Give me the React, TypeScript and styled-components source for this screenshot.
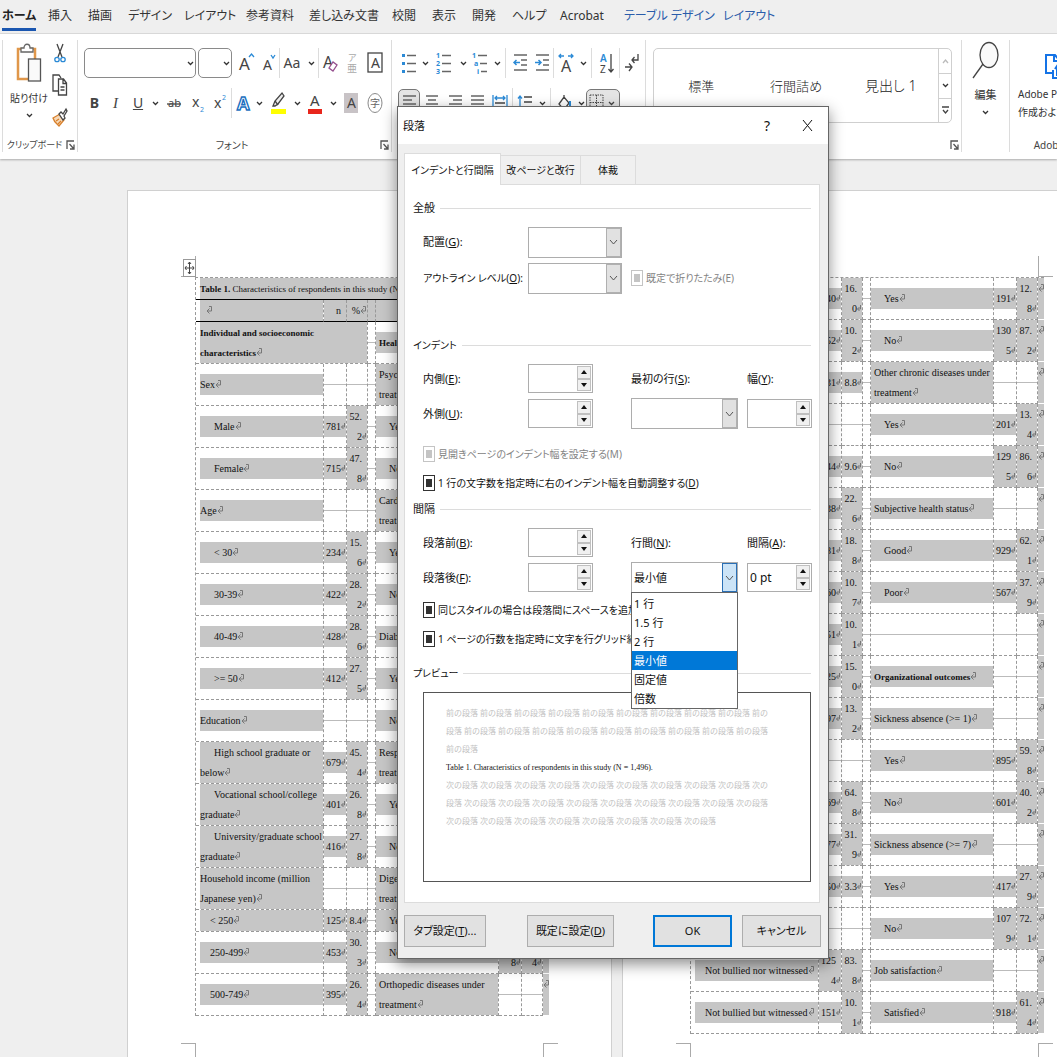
import React from 'react';
import styled, { createGlobalStyle, css } from 'styled-components';

const UI = '"Noto Sans", "Noto Sans CJK JP", sans-serif';
const SERIF = '"Liberation Serif", "Noto Sans CJK JP", serif';
const BLUE = '#2b8ad6';
const INK = '#444';

const Global = createGlobalStyle`
  *, *::before, *::after { box-sizing: border-box; }
  body { margin: 0; background: #efefef; font-family: ${UI}; font-feature-settings: "palt"; color: #222; }
  button, input, select { font: inherit; font-feature-settings: inherit; color: inherit; margin: 0; }
`;

/* ---------- window ---------- */

const Window = styled.div`
  position: relative;
  height: 100vh;
  display: flex;
  flex-direction: column;
  overflow: hidden;
`;

const Tabs = styled.nav`
  display: grid;
  grid-template-columns: 46px 40px 40px 56px 62px 63px 83px 40px 40px 40px 48px 64px 99px 60px;
  flex: none;
  height: 34px;
  padding: 4px 0 0 2px;
  border-bottom: 1px solid #dcdcdc;
`;

const TabLink = styled.a<{ $active?: boolean; $accent?: boolean }>`
  justify-self: start;
  font-size: 12px;
  line-height: 24px;
  height: 27px;
  white-space: nowrap;
  text-decoration: none;
  color: ${p => (p.$accent ? '#2a5caa' : '#333')};
  ${p => p.$active && css`font-weight: 700; color: #222; border-bottom: 3px solid #1a56b0;`}
`;

const Ribbon = styled.div`
  display: flex;
  flex: none;
  height: 125px;
  padding: 6px 0 7px 2px;
  overflow: hidden;
  background: #fff;
  box-shadow: 0 1px 2px #aaa;
  z-index: 1;
`;

const Group = styled.section<{ $w: number; $pad?: number }>`
  flex: 0 0 ${p => p.$w}px;
  min-width: 0;
  display: flex;
  flex-direction: column;
  justify-content: space-between;
  border-left: 1px solid #dcdcdc;
  padding-left: ${p => p.$pad ?? 0}px;
  white-space: nowrap;
`;

const GroupFoot = styled.div<{ $tight?: boolean }>`
  display: flex;
  align-items: center;
  height: 14px;
  font-size: ${p => (p.$tight ? 9 : 10)}px;
  line-height: 14px;
  color: #444;
  padding-right: 2px;
`;

const FootName = styled.span`
  flex: 1;
  text-align: center;
`;

const Plain = styled.button<{ $w?: number; $on?: boolean }>`
  display: flex;
  align-items: center;
  justify-content: center;
  flex: none;
  width: ${p => (p.$w ? `${p.$w}px` : 'auto')};
  height: 28px;
  padding: 0;
  border: 0;
  background: none;
  font-size: 14px;
  line-height: 20px;
  color: #444;
  ${p => p.$on && css`border: 1px solid #777; border-radius: 5px; background: #e4e4e4;`}
`;

const Tools = styled.div<{ $top?: number }>`
  display: flex;
  align-items: center;
  height: 30px;
  margin-top: ${p => p.$top ?? 0}px;
`;

const Rule = styled.span<{ $m?: number }>`
  flex: none;
  width: 1px;
  height: 30px;
  margin: 0 ${p => p.$m ?? 0}px;
  background: #dcdcdc;
`;

const Combo = styled.div<{ $w: number }>`
  display: grid;
  flex: none;
  width: ${p => p.$w}px;
  height: 30px;
  margin-right: 2px;
  align-items: center;
  select, svg { grid-area: 1 / 1; }
  svg { justify-self: end; margin-right: 2px; pointer-events: none; }
  select {
    width: 100%;
    height: 100%;
    appearance: none;
    border: 1px solid #8a8a8a;
    border-radius: 5px;
    background: #fff;
  }
`;

const ClipRow = styled.div`
  display: flex;
  justify-content: space-between;
  padding: 3px 9px 0 7px;
`;

const Stack = styled.div<{ $gap?: number }>`
  display: flex;
  flex-direction: column;
  align-items: center;
  gap: ${p => p.$gap ?? 0}px;
`;

const BigButton = styled.button<{ $small?: boolean }>`
  display: flex;
  flex-direction: column;
  align-items: center;
  gap: 6px;
  padding: 0;
  border: 0;
  background: none;
  font-size: ${p => (p.$small ? 10 : 11)}px;
  line-height: 18px;
  color: #333;
`;

const Gallery = styled.div`
  display: flex;
  height: 75px;
  margin: 8px 9px 0 7px;
  border: 1px solid #cfcfcf;
  border-radius: 5px;
`;

const StyleButton = styled.button<{ $size: number }>`
  flex: 1;
  padding: 0;
  border: 0;
  background: none;
  font-size: ${p => p.$size}px;
  font-weight: 300;
  line-height: 24px;
  color: #222;
`;

const Scrolls = styled.div`
  display: grid;
  grid-template-rows: repeat(3, 1fr);
  width: 13px;
  border-left: 1px solid #cfcfcf;
  button { display: grid; place-items: center; padding: 0; border: 0; background: none; }
  button + button { border-top: 1px solid #cfcfcf; }
`;

const AdobeButton = styled(BigButton)`
  width: 80px;
  padding-top: 6px;
  align-items: stretch;
  text-align: left;
  gap: 5px;
  svg { align-self: center; }
`;

/* ---------- icons ---------- */

type IcoProps = { w: number; h: number; box?: string; children: React.ReactNode };
const Ico = ({ w, h, box, children }: IcoProps) => (
  <svg width={w} height={h} viewBox={box ?? `0 0 ${w} ${h}`} fill="none" stroke={INK} strokeWidth="1.3" overflow="visible" aria-hidden="true">
    {children}
  </svg>
);

const Chev = ({ color = '#333' }: { color?: string }) => (
  <Ico w={7} h={5}><path d="M1 1l2.500 2.500L6 1" stroke={color} /></Ico>
);

const Drop = ({ w = 10 }: { w?: number }) => <Plain $w={w} aria-label="オプション"><Chev /></Plain>;

const Launcher = () => (
  <Ico w={9} h={10}><path d="M1 9V1h7M3.500 4l4 4.500M8 4.500V9H4" stroke="#555" /></Ico>
);

const Lines = ({ rows }: { rows: [number, number][] }) => (
  <Ico w={16} h={20}>
    {rows.map(([a, b], i) => <path key={i} d={`M${a} ${3 + i * 4}H${b}`} strokeWidth="1.5" stroke="#666" />)}
  </Ico>
);

const PasteIcon = () => (
  <Ico w={26} h={40}>
    <rect x="2" y="6" width="17" height="30" fill="#fff" stroke="#e0974a" strokeWidth="2.500" />
    <path d="M5 9V5h3c0-5 6-5 6 0h3v4z" fill="#fff" stroke="#666" />
    <rect x="12.500" y="16" width="12" height="22" fill="#fafafa" stroke="#555" />
  </Ico>
);

const ScissorsIcon = () => (
  <Ico w={14} h={20}>
    <path d="M4 1l5 13M10 1L5 14" />
    <circle cx="4" cy="16.500" r="2.200" stroke={BLUE} /><circle cx="10" cy="16.500" r="2.200" stroke={BLUE} />
  </Ico>
);

const CopyIcon = () => (
  <Ico w={16} h={22}>
    <path d="M6 17H1V1h6l2 3" />
    <path d="M6.500 5h5l3 4v12h-8zM11 5v4.500h3.500M8.500 13h4M8.500 16h4" fill="#fff" />
  </Ico>
);

const BrushIcon = () => (
  <Ico w={16} h={20}>
    <path d="M1 11l7-4 4 6-5 6c-2-2-5-4-6-8z" fill="#f7d9b8" stroke="#d8802c" />
    <path d="M4 14l3-2M6 17l3-3" stroke="#d8802c" />
    <path d="M7 7l2-2 2 2 3-5 1 2-3 5 1 2-2 2z" fill="#fff" />
  </Ico>
);

const TextGlyph = ({ children, size = 15, x = 1, y = 17 }: { children: string; size?: number; x?: number; y?: number }) => (
  <text x={x} y={y} fontSize={size} fontFamily="Noto Sans, Noto Sans CJK JP" fill="#444" stroke="none">{children}</text>
);

const ListIcon = ({ marks }: { marks: string[] }) => (
  <Ico w={16} h={22}>
    {marks.map((m, i) => (
      <React.Fragment key={i}>
        {m === '•'
          ? <rect x="1" y={2 + i * 8} width="3" height="3" fill={BLUE} stroke="none" />
          : <text x={m === 'a' ? 2 : m === 'i' ? 5 : 0} y={6 + i * 8} fontSize="7" fontWeight="700" fontFamily="Noto Sans" fill={BLUE} stroke="none">{m}</text>}
        <path d={`M${m === 'a' ? 8 : m === 'i' ? 9 : 6} ${3.5 + i * 8}H15`} stroke="#666" strokeWidth="1.500" />
      </React.Fragment>
    ))}
  </Ico>
);

const DentIcon = ({ out }: { out?: boolean }) => (
  <Ico w={15} h={20}>
    <path d="M1 2h13M8 7h6M8 12h6M1 17h13" stroke="#666" strokeWidth="1.500" />
    <path d={out ? 'M7 9.500H1M3.500 7L1 9.500l2.500 2.500' : 'M0 9.500h6M3.500 7L6 9.500 3.500 12'} stroke={BLUE} strokeWidth="1.500" />
  </Ico>
);

/* ---------- document ---------- */

const Canvas = styled.main`
  flex: 1;
  min-height: 0;
  display: flex;
  gap: 10px;
  padding: 31px 0 0 127px;
  overflow: hidden;
`;

const Sheet = styled.article`
  flex: 0 0 485px;
  display: flex;
  flex-direction: column;
  padding: 65px 0 0 67px;
  border: 1px solid #d0d0d0;
  border-bottom: 0;
  background: #fff;
`;

const Marks = styled.div<{ $foot?: boolean }>`
  position: relative;
  display: flex;
  flex: none;
  justify-content: space-between;
  width: 377px;
  margin-left: -14px;
  ${p => p.$foot && css`margin-top: auto;`}
`;

const Corner = styled.span<{ $side: 'left' | 'right'; $foot?: boolean }>`
  width: 15px;
  height: ${p => (p.$foot ? 14 : 21)}px;
  border: 0 solid #aaa;
  border-${p => (p.$side === 'left' ? 'right' : 'left')}-width: 1px;
  border-${p => (p.$foot ? 'top' : 'bottom')}-width: 1px;
`;

const MoveHandle = styled.span`
  position: absolute;
  left: 2px;
  top: 3px;
  width: 13px;
  height: 18px;
  display: grid;
  place-items: center;
  border: 1px solid #999;
  background: #fff;
`;

const Grid = styled.table`
  width: 354px;
  table-layout: fixed;
  border-collapse: separate;
  border-spacing: 0;
  border: 0 dashed #999;
  border-width: 1px 0 0 1px;
  font-family: ${SERIF};
  font-size: 10px;
  color: #111;
`;

const Cell = styled.td<{ $lead?: boolean; $fill?: boolean; $empty?: boolean; $rule?: boolean }>`
  padding: 0 0 0 ${p => (p.$lead ? 4 : 0)}px;
  border: 0 dashed #999;
  border-width: 0 1px 1px 0;
  overflow: hidden;
  ${p => p.$rule && css`border-bottom: 1px solid #000;`}
  ${p => p.$fill && css`background: #c6c6c6;`}
  ${p => p.$empty && css`background: linear-gradient(#bbb, #bbb) center / 100% 1px no-repeat;`}
`;

const Row = styled.tr<{ $short?: boolean }>`
  height: ${p => (p.$short ? 22 : 42)}px;
`;

const EndCell = styled.td`
  padding: 6px 0 0;
  vertical-align: top;
  border-bottom: 1px solid #fff;
  background: #c6c6c6;
  svg { display: block; }
`;

const Bar = styled.div<{ $indent?: number; $inset?: number; $bold?: boolean; $num?: boolean; $fine?: boolean }>`
  padding: 1px 0 0 ${p => p.$inset ?? 0}px;
  background: #c6c6c6;
  line-height: 20px;
  white-space: nowrap;
  text-indent: ${p => p.$indent ?? 0}px;
  font-weight: ${p => (p.$bold ? 700 : 400)};
  ${p => p.$fine && css`font-size: 9px;`}
  ${p => p.$num && css`text-align: right; padding-right: 1px;`}
`;

const Line = styled.div<{ $open?: boolean }>`
  padding-right: ${p => (p.$open ? 4 : 0)}px;
  & + & { text-indent: 0; }
`;

const Return = ({ small }: { small?: boolean }) => (
  <svg width={small ? 4 : 6} height="8" viewBox={small ? '0 0 4 8' : '0 0 6 8'} fill="none" stroke="#777" aria-hidden="true">
    {small ? <path d="M3.500 1v4H.500M2.500 3L.500 5l2 2" /> : <path d="M3 .500h2.500V5H1M3.500 2.500L1 5l2.500 2.500" />}
  </svg>
);

type Half = { t?: string[]; i?: number; b?: boolean; n?: string[]; p?: string[] };

const Num = ({ v }: { v?: string[] }) =>
  v ? (
    <Cell>
      <Bar $num>
        {v.map((s, k) => (
          <Line key={k} $open={k < v.length - 1}>{s}{k === v.length - 1 && <Return small />}</Line>
        ))}
      </Bar>
    </Cell>
  ) : <Cell $empty />;

const Label = ({ h, lead, span }: { h: Half; lead?: boolean; span?: number }) =>
  h.t ? (
    <Cell $lead={lead} colSpan={span}>
      <Bar $indent={h.i} $bold={h.b} $inset={lead ? 0 : 3} $fine={h.b}>
        {h.t.map((s, k) => (
          <Line key={k}>{s}{k === h.t!.length - 1 && <Return />}</Line>
        ))}
      </Bar>
    </Cell>
  ) : <Cell $empty colSpan={span} />;

const BodyRow = ({ l, r, short, span }: { l: Half; r: Half; short?: boolean; span?: boolean }) => (
  <Row $short={short}>
    <Label h={l} lead span={span ? 3 : undefined} />
    {!span && <><Num v={l.n} /><Num v={l.p} /></>}
    <Cell $empty />
    <Label h={r} />
    <Num v={r.n} />
    <Num v={r.p} />
    <EndCell><Return /></EndCell>
  </Row>
);

const Cols = () => (
  <colgroup>
    {[128, 23, 21, 8, 123, 23, 21, 6].map((w, k) => <col key={k} style={{ width: w }} />)}
  </colgroup>
);

const yes: Half = { t: ['Yes'], i: 10 };
const no: Half = { t: ['No'], i: 10 };
const under = (s: string): Half => ({ t: [`${s} diseases under`, 'treatment'] });

const pageOne: [Half, Half][] = [
  [{ t: ['Sex'] }, under('Psychiatric')],
  [{ t: ['Male'], i: 14, n: ['781'], p: ['52.', '2'] }, yes],
  [{ t: ['Female'], i: 14, n: ['715'], p: ['47.', '8'] }, no],
  [{ t: ['Age'] }, under('Cardiac')],
  [{ t: ['< 30'], i: 14, n: ['234'], p: ['15.', '6'] }, yes],
  [{ t: ['30-39'], i: 14, n: ['422'], p: ['28.', '2'] }, no],
  [{ t: ['40-49'], i: 14, n: ['428'], p: ['28.', '6'] }, { t: ['Diabetes'] }],
  [{ t: ['>= 50'], i: 14, n: ['412'], p: ['27.', '5'] }, yes],
  [{ t: ['Education'] }, no],
  [{ t: ['High school graduate or', 'below'], i: 14, n: ['679'], p: ['45.', '4'] }, under('Respiratory')],
  [{ t: ['Vocational school/college', 'graduate'], i: 14, n: ['401'], p: ['26.', '8'] }, yes],
  [{ t: ['University/graduate school', 'graduate'], i: 14, n: ['416'], p: ['27.', '8'] }, no],
  [{ t: ['Household income (million', 'Japanese yen)'] }, under('Digestive')],
  [{ t: ['< 250'], i: 10, n: ['125'], p: ['8.4'] }, yes],
  [{ t: ['250-499'], i: 10, n: ['453'], p: ['30.', '3'] }, { ...no, n: ['141', '8'], p: ['94.', '4'] }],
  [{ t: ['500-749'], i: 10, n: ['395'], p: ['26.', '4'] }, under('Orthopedic')],
];

const pageTwo: [Half, Half][] = [
  [{ t: ['Yes'], i: 10, n: ['240'], p: ['16.', '0'] }, { ...yes, n: ['191'], p: ['12.', '8'] }],
  [{ t: ['No'], i: 10, n: ['152'], p: ['10.', '2'] }, { ...no, n: ['130', '5'], p: ['87.', '2'] }],
  [{ t: ['Yes'], i: 10, n: ['131'], p: ['8.8'] }, { t: ['Other chronic diseases under', 'treatment'] }],
  [{}, { ...yes, n: ['201'], p: ['13.', '4'] }],
  [{ t: ['Yes'], i: 10, n: ['144'], p: ['9.6'] }, { ...no, n: ['129', '5'], p: ['86.', '6'] }],
  [{ t: ['Yes'], i: 10, n: ['338'], p: ['22.', '6'] }, { t: ['Subjective health status'] }],
  [{ t: ['Yes'], i: 10, n: ['281'], p: ['18.', '8'] }, { t: ['Good'], i: 10, n: ['929'], p: ['62.', '1'] }],
  [{ t: ['Yes'], i: 10, n: ['160'], p: ['10.', '7'] }, { t: ['Poor'], i: 10, n: ['567'], p: ['37.', '9'] }],
  [{ t: ['Yes'], i: 10, n: ['151'], p: ['10.', '1'] }, {}],
  [{ t: ['Yes'], i: 10, n: ['225'], p: ['15.', '0'] }, { t: ['Organizational outcomes'], b: true }],
  [{ t: ['Yes'], i: 10, n: ['197'], p: ['13.', '2'] }, { t: ['Sickness absence (>= 1)'] }],
  [{}, { ...yes, n: ['895'], p: ['59.', '8'] }],
  [{ t: ['No'], i: 10, n: ['969'], p: ['64.', '8'] }, { ...no, n: ['601'], p: ['40.', '2'] }],
  [{ t: ['Yes'], i: 10, n: ['477'], p: ['31.', '9'] }, { t: ['Sickness absence (>= 7)'] }],
  [{ t: ['Yes'], i: 10, n: ['50'], p: ['3.3'] }, { ...yes, n: ['417'], p: ['27.', '9'] }],
  [{}, { ...no, n: ['107', '9'], p: ['72.', '1'] }],
  [{ t: ['Not bullied nor witnessed'], i: 10, n: ['125', '4'], p: ['83.', '8'] }, { t: ['Job satisfaction'] }],
  [{ t: ['Not bullied but witnessed'], i: 10, n: ['151'], p: ['10.', '1'] }, { t: ['Satisfied'], i: 10, n: ['918'], p: ['61.', '4'] }],
];

/* ---------- dialog ---------- */

const Dialog = styled.div`
  position: absolute;
  z-index: 5;
  left: 397px;
  top: 106px;
  width: 432px;
  border: 1px solid #666;
  background: #efefef;
  box-shadow: 0 5px 14px rgba(0, 0, 0, 0.45);
  font-size: 11px;
  line-height: 18px;
  color: #111;
  white-space: nowrap;
`;

const TitleBar = styled.header`
  display: flex;
  align-items: center;
  height: 37px;
  padding: 0 13px 0 5px;
  background: #fff;
  span { flex: 1; }
  button { display: grid; place-items: center; width: 16px; height: 24px; margin-left: 24px; padding: 0; border: 0; background: none; font-size: 14px; }
`;

const PageTabs = styled.div`
  display: flex;
  align-items: flex-end;
  height: 40px;
  padding-left: 6px;
`;

const PageTab = styled.button<{ $w: number; $active?: boolean }>`
  width: ${p => p.$w}px;
  height: ${p => (p.$active ? 32 : 29)}px;
  padding: 0;
  border: 1px solid #dcdcdc;
  border-left-width: ${p => (p.$active ? 1 : 0)}px;
  border-bottom: 0;
  font-size: 10px;
  background: ${p => (p.$active ? '#fff' : '#f0f0f0')};
  ${p => p.$active && css`margin-bottom: -1px; z-index: 1;`}
`;

const Panel = styled.form`
  margin: 0 8px 0 6px;
  padding: 13px 8px 20px 8px;
  border: 1px solid #dcdcdc;
  background: #fff;
`;

const Section = styled.h3<{ $top?: number; $gap?: number; $small?: boolean }>`
  display: flex;
  align-items: center;
  gap: 5px;
  height: 20px;
  margin: ${p => p.$top ?? 0}px 0 ${p => p.$gap ?? 6}px;
  font-size: ${p => (p.$small ? 10 : 11)}px;
  font-weight: 400;
  &::after { content: ''; flex: 1; height: 1px; background: #dcdcdc; }
`;

const FormRow = styled.div<{ $h?: number; $small?: boolean }>`
  display: grid;
  grid-template-columns: 105px 103px 116px 65px;
  align-items: center;
  height: ${p => p.$h ?? 35}px;
  padding-left: 10px;
  ${p => p.$small && css`font-size: 10px;`}
`;

const Picker = styled.div<{ $w: number; $hot?: boolean }>`
  position: relative;
  display: grid;
  grid-template-columns: 1fr 15px;
  width: ${p => p.$w}px;
  height: 31px;
  border: 1px solid #adadad;
  background: #fff;
  select {
    grid-area: 1 / 1 / 2 / 3;
    width: 100%;
    padding: 0 2px;
    border: 0;
    background: none;
    appearance: none;
  }
`;

const PickerArrow = styled.span<{ $hot?: boolean }>`
  grid-area: 1 / 2;
  display: grid;
  place-items: center;
  pointer-events: none;
  border: 1px solid ${p => (p.$hot ? '#2a6fb5' : '#b0b0b0')};
  background: ${p => (p.$hot ? '#cce4f7' : '#e1e1e1')};
`;

const Options = styled.ul`
  position: absolute;
  z-index: 3;
  top: 29px;
  left: -1px;
  right: -1px;
  margin: 0;
  padding: 1px 0 0;
  list-style: none;
  border: 1px solid #666;
  background: #fff;
`;

const Option = styled.li<{ $on?: boolean }>`
  height: 19px;
  padding-left: 2px;
  line-height: 19px;
  ${p => p.$on && css`background: #0078d7; color: #fff;`}
`;

const SpinBox = styled.div`
  display: grid;
  grid-template: 1fr 1fr / 1fr 14px;
  width: 65px;
  height: 29px;
  padding: 1px;
  border: 1px solid #adadad;
  background: #fff;
  input { grid-row: 1 / 3; min-width: 0; padding: 0 1px; border: 0; background: none; font-size: 12px; outline: 0; }
  button { display: grid; place-items: center; padding: 0; border: 1px solid #c0c0c0; background: #f0f0f0; }
`;

const CheckRow = styled.label<{ $off?: boolean }>`
  display: flex;
  align-items: center;
  gap: 3px;
  height: 29px;
  font-size: 10px;
  color: ${p => (p.$off ? '#838383' : '#111')};
  input {
    flex: none;
    appearance: none;
    width: 12px;
    height: 16px;
    border: 1px solid ${p => (p.$off ? '#c4c4c4' : '#333')};
    background: linear-gradient(${p => (p.$off ? '#c4c4c4, #c4c4c4' : '#333, #333')}) center / 6px 8px no-repeat #fff;
  }
`;

const Checks = styled.div<{ $top?: number; $room?: number }>`
  padding: ${p => p.$top ?? 0}px ${p => p.$room ?? 0}px 0 10px;
`;

const Preview = styled.div`
  height: 190px;
  margin-left: 10px;
  padding: 12px 22px;
  border: 1px solid #555;
  font-family: ${SERIF};
  font-feature-settings: normal;
  font-size: 8px;
  line-height: 18px;
  color: #c2c2c2;
  p { margin: 0; }
  strong { font-weight: 400; color: #111; }
`;

const Actions = styled.footer`
  display: flex;
  justify-content: space-between;
  padding: 12px 7px 11px 6px;
`;

const Action = styled.button<{ $w: number; $main?: boolean }>`
  width: ${p => p.$w}px;
  height: 32px;
  padding: 0;
  border: ${p => (p.$main ? '2px solid #0078d7' : '1px solid #adadad')};
  background: #e1e1e1;
`;

const ActionSet = styled.div<{ $gap: number }>`
  display: flex;
  gap: ${p => p.$gap}px;
`;

const Key = ({ t, k, end = ':' }: { t: string; k: string; end?: string }) => <>{t}(<u>{k}</u>){end}</>;

const Field = ({ id, w, value, hot, children }: { id: string; w: number; value?: string; hot?: boolean; children?: React.ReactNode }) => (
  <Picker $w={w}>
    <select id={id} defaultValue={value ?? ''}><option>{value ?? ''}</option></select>
    <PickerArrow $hot={hot}><Ico w={9} h={6}><path d="M1 1l3.500 4L8 1" stroke="#555" strokeWidth="1" /></Ico></PickerArrow>
    {children}
  </Picker>
);

const Spin = ({ id, value = '' }: { id: string; value?: string }) => (
  <SpinBox>
    <input id={id} type="text" defaultValue={value} />
    <button type="button" aria-label="増やす"><Ico w={6} h={4}><path d="M0 4l3-4 3 4z" fill="#111" stroke="none" /></Ico></button>
    <button type="button" aria-label="減らす"><Ico w={6} h={4}><path d="M0 0l3 4 3-4z" fill="#111" stroke="none" /></Ico></button>
  </SpinBox>
);

const tabs = ['ホーム', '挿入', '描画', 'デザイン', 'レイアウト', '参考資料', '差し込み文書', '校閲', '表示', '開発', 'ヘルプ', 'Acrobat', 'テーブル デザイン', 'レイアウト'];
const prev = '前の段落 ';
const next = '次の段落 ';

const RibbonBar = () => (
  <Ribbon>
    <Group $w={75}>
      <ClipRow>
        <BigButton $small><PasteIcon />貼り付け<Chev /></BigButton>
        <Stack $gap={11}><ScissorsIcon /><CopyIcon /><BrushIcon /></Stack>
      </ClipRow>
      <GroupFoot $tight><FootName>クリップボード</FootName><Launcher /></GroupFoot>
    </Group>
    <Group $w={314} $pad={6}>
      <div>
        <Tools $top={8}>
          <Combo $w={112}><select aria-label="フォント" /><Chev /></Combo>
          <Combo $w={34}><select aria-label="サイズ" /><Chev /></Combo>
          <Plain $w={24}><Ico w={16} h={22}><TextGlyph size={17} x={1} y={18}>A</TextGlyph><path d="M11 5l2.500-3L16 5" stroke={BLUE} /></Ico></Plain>
          <Plain $w={21}><Ico w={14} h={22}><TextGlyph size={14} x={1} y={18}>A</TextGlyph><path d="M9 3l2 3 2-3" stroke={BLUE} /></Ico></Plain>
          <Rule />
          <Plain $w={24}>Aa</Plain><Drop w={14} />
          <Rule />
          <Plain $w={22}><Ico w={16} h={22}><TextGlyph size={16} x={1} y={16}>A</TextGlyph><path d="M7 16l4-6 4 3-4 6z" fill="#fff" stroke="#96508f" /></Ico></Plain>
          <Plain $w={22}><Ico w={12} h={22}>
            <text x="2" y="9" fontSize="9" fontFamily="Noto Sans CJK JP" fill="#aaa" stroke="none">ア</text>
            <text x="1" y="20" fontSize="10" fontFamily="Noto Sans CJK JP" fill="#aaa" stroke="none">亜</text>
          </Ico></Plain>
          <Plain $w={24}><Ico w={16} h={22}><rect x="1" y="1" width="14" height="19" /><TextGlyph size={14} x={4} y={16}>A</TextGlyph></Ico></Plain>
        </Tools>
        <Tools $top={10}>
          <Plain $w={21}><b>B</b></Plain>
          <Plain $w={22}><Ico w={10} h={20}><text x="2" y="15" fontSize="15" fontStyle="italic" fontFamily="Liberation Serif" fill="#444" stroke="none">I</text></Ico></Plain>
          <Plain $w={22}><u>U</u></Plain><Drop w={12} />
          <Plain $w={26}><Ico w={14} h={20}><TextGlyph size={11} x={1} y={14}>ab</TextGlyph><path d="M0 11h14" /></Ico></Plain>
          <Plain $w={22}><Ico w={13} h={22}><TextGlyph size={14} x={0} y={15}>x</TextGlyph><text x="8" y="20" fontSize="7" fontFamily="Noto Sans" fill={BLUE} stroke="none">2</text></Ico></Plain>
          <Plain $w={22}><Ico w={13} h={22}><TextGlyph size={14} x={0} y={16}>x</TextGlyph><text x="8" y="8" fontSize="7" fontFamily="Noto Sans" fill={BLUE} stroke="none">2</text></Ico></Plain>
          <Rule />
          <Plain $w={22}><Ico w={16} h={22}><text x="2" y="18" fontSize="18" fontWeight="700" fontFamily="Noto Sans" fill="#fff" stroke="#1a6fc0" strokeWidth="1.400">A</text></Ico></Plain>
          <Drop />
          <Plain $w={28}><Ico w={16} h={22}>
            <path d="M3 14l2-5 7-8 2 3-6 8-3 2z" fill="#eee" /><path d="M5 9l3 4" />
            <rect x="1" y="17" width="15" height="5" fill="#ff0" stroke="none" />
          </Ico></Plain>
          <Drop />
          <Plain $w={26}><Ico w={16} h={22}><TextGlyph size={15} x={3} y={14}>A</TextGlyph><rect x="1" y="17" width="14" height="5" fill="#e8261c" stroke="none" /></Ico></Plain>
          <Drop />
          <Plain $w={26}><Ico w={14} h={20}><rect width="14" height="20" fill="#c8c3c6" stroke="none" /><TextGlyph size={14} x={3} y={15}>A</TextGlyph></Ico></Plain>
          <Plain $w={22}><Ico w={16} h={22}><ellipse cx="8" cy="11" rx="7" ry="9.500" stroke="#888" strokeWidth="1" /><text x="3" y="15" fontSize="10" fontFamily="Noto Sans CJK JP" fill="#666" stroke="none">字</text></Ico></Plain>
        </Tools>
      </div>
      <GroupFoot><FootName>フォント</FootName><Launcher /></GroupFoot>
    </Group>
    <Group $w={254} $pad={6}>
      <div>
        <Tools $top={8}>
          <Plain $w={22}><ListIcon marks={['•', '•', '•']} /></Plain><Drop />
          <Plain $w={28}><ListIcon marks={['1', '2', '3']} /></Plain><Drop />
          <Plain $w={24}><ListIcon marks={['1', 'a', 'i']} /></Plain><Drop />
          <Rule $m={3} />
          <Plain $w={22}><DentIcon out /></Plain>
          <Plain $w={22}><DentIcon /></Plain>
          <Rule />
          <Plain $w={24}><Ico w={16} h={22}><TextGlyph size={16} x={3} y={20}>A</TextGlyph><path d="M6 4H1M3 2L1 4l2 2M10 4h5M13 2l2 2-2 2" stroke={BLUE} /></Ico></Plain><Drop />
          <Rule $m={3} />
          <Plain $w={24}><Ico w={16} h={22}>
            <text x="1" y="10" fontSize="10" fontWeight="600" fontFamily="Noto Sans" fill={BLUE} stroke="none">A</text>
            <TextGlyph size={10} x={1} y={21}>Z</TextGlyph><path d="M12 2v18M9.500 17l2.500 3 2.500-3" />
          </Ico></Plain>
          <Rule />
          <Plain $w={24}><Ico w={16} h={22}><path d="M14 2v6H8M10.500 5L8 8l2.500 3M1 15h7M5 11.500L8 15l-3 4" /></Ico></Plain>
        </Tools>
        <Tools $top={10}>
          <Plain $w={22} $on><Lines rows={[[2, 15], [2, 11], [2, 15], [2, 11]]} /></Plain>
          <Plain $w={24}><Lines rows={[[2, 14], [4, 12], [2, 14], [4, 12]]} /></Plain>
          <Plain $w={22}><Lines rows={[[2, 15], [6, 15], [2, 15], [6, 15]]} /></Plain>
          <Plain $w={22}><Lines rows={[[2, 15], [2, 15], [2, 15], [2, 15]]} /></Plain>
          <Plain $w={24}><Ico w={16} h={20}><path d="M1 2v16M15 2v16M3 5h10M5 3L3 5l2 2M11 3l2 2-2 2" stroke={BLUE} /><path d="M3 10h10M3 14h10" /></Ico></Plain>
          <Rule />
          <Plain $w={24}><Ico w={16} h={20}><path d="M3 3v13M1 5.500L3 3l2 2.500" stroke={BLUE} /><path d="M7 4h8M7 9h8M7 14h8" /></Ico></Plain><Drop />
          <Rule $m={3} />
          <Plain $w={22}><Ico w={14} h={20}><path d="M6 2v4M1 11l5-7 5 6-5 7z" /><path d="M12 8v7" stroke={BLUE} strokeWidth="2" /></Ico></Plain><Drop />
          <Plain $w={34} $on><Ico w={15} h={20}><path d="M1 2h13v15H1zM7.500 2v15M1 9.500h13" strokeWidth="1" strokeDasharray="1.500 1" /></Ico><Ico w={14} h={5}><path d="M5 1l2.500 2.500L10 1" /></Ico></Plain>
        </Tools>
      </div>
    </Group>
    <Group $w={316}>
      <Gallery>
        <StyleButton $size={13}>標準</StyleButton>
        <StyleButton $size={13}>行間詰め</StyleButton>
        <StyleButton $size={14}>見出し 1</StyleButton>
        <Scrolls>
          <button aria-label="上"><Ico w={7} h={5}><path d="M1 4l2.500-3L6 4" stroke="#bbb" /></Ico></button>
          <button aria-label="下"><Chev /></button>
          <button aria-label="その他"><Ico w={7} h={9}><path d="M0 1h7M1 4l2.500 3L6 4" /></Ico></button>
        </Scrolls>
      </Gallery>
      <GroupFoot><FootName /><Launcher /></GroupFoot>
    </Group>
    <Group $w={48}>
      <BigButton><Ico w={28} h={40}><ellipse cx="17" cy="15" rx="9" ry="12.500" fill="#fafafa" /><path d="M11 24L1 38" /></Ico>編集<Chev /></BigButton>
    </Group>
    <Group $w={112} $pad={8}>
      <AdobeButton $small>
        <Ico w={26} h={34}><path d="M7 27H1V9h9l5 6v4M9 9v6h6M12 32H8V24M12 20v10M10 23l2-3 3 3" stroke="#1473e6" strokeWidth="2" /></Ico>
        <span>Adobe PDF を<br />作成および共有</span>
      </AdobeButton>
      <GroupFoot><FootName>Adobe Acrobat</FootName></GroupFoot>
    </Group>
  </Ribbon>
);

export default function App() {
  return (
    <Window>
      <Global />
      <Tabs>
        {tabs.map((t, k) => <TabLink key={k} href="#" $active={k === 0} $accent={k > 11}>{t}</TabLink>)}
      </Tabs>
      <RibbonBar />
      <Canvas>
        <Sheet>
          <Marks>
            <Corner $side="left" /><Corner $side="right" />
            <MoveHandle><Ico w={11} h={14}><path d="M5.500 1v12M1 7h9M4 3l1.500-2L7 3M4 11l1.500 2L7 11M2.500 5L1 7l1.500 2M8.500 5L10 7 8.500 9" strokeWidth="1" /></Ico></MoveHandle>
          </Marks>
          <Grid>
            <Cols />
            <tbody>
              <Row $short>
                <Cell $lead $rule colSpan={7}><Bar $fine><b>Table 1.</b> Characteristics of respondents in this study (N = 1,496).</Bar></Cell>
                <EndCell><Return /></EndCell>
              </Row>
              <Row $short>
                <Cell $lead $rule><Bar $indent={6}><Return /></Bar></Cell>
                <Cell $rule $fill><Bar $num><Line $open>n</Line></Bar></Cell>
                <Cell $rule $fill><Bar $num>%<Return /></Bar></Cell>
                <Cell $rule $fill /><Cell $rule $fill /><Cell $rule $fill /><Cell $rule $fill />
                <EndCell><Return /></EndCell>
              </Row>
              <BodyRow span l={{ t: ['Individual and socioeconomic', 'characteristics'], b: true }} r={{ t: ['Health status'], b: true }} />
              {pageOne.map(([l, r], k) => <BodyRow key={k} l={l} r={r} short={k === 13} />)}
            </tbody>
          </Grid>
          <Marks $foot><Corner $side="left" $foot /><Corner $side="right" $foot /></Marks>
        </Sheet>
        <Sheet>
          <Marks><Corner $side="left" /><Corner $side="right" /></Marks>
          <Grid>
            <Cols />
            <tbody>{pageTwo.map(([l, r], k) => <BodyRow key={k} l={l} r={r} />)}</tbody>
          </Grid>
          <Marks $foot><Corner $side="left" $foot /><Corner $side="right" $foot /></Marks>
        </Sheet>
      </Canvas>

      <Dialog role="dialog" aria-label="段落">
        <TitleBar>
          <span>段落</span>
          <button>?</button>
          <button aria-label="閉じる"><Ico w={11} h={13}><path d="M1 1l9 11M10 1L1 12" strokeWidth="1" stroke="#111" /></Ico></button>
        </TitleBar>
        <PageTabs>
          <PageTab $w={97} $active>インデントと行間隔</PageTab>
          <PageTab $w={80}>改ページと改行</PageTab>
          <PageTab $w={55}>体裁</PageTab>
        </PageTabs>
        <Panel>
          <Section>全般</Section>
          <FormRow $h={36}><label htmlFor="align"><Key t="配置" k="G" /></label><Field id="align" w={94} /></FormRow>
          <FormRow $h={36} $small>
            <label htmlFor="level"><Key t="アウトライン レベル" k="O" /></label><Field id="level" w={94} />
            <CheckRow $off><input type="checkbox" disabled />既定で折りたたみ(E)</CheckRow>
          </FormRow>
          <Section $top={39} $small>インデント</Section>
          <FormRow>
            <label htmlFor="inside"><Key t="内側" k="E" /></label><Spin id="inside" />
            <label htmlFor="first"><Key t="最初の行" k="S" /></label><label htmlFor="by"><Key t="幅" k="Y" /></label>
          </FormRow>
          <FormRow>
            <label htmlFor="outside"><Key t="外側" k="U" /></label><Spin id="outside" />
            <Field id="first" w={107} /><Spin id="by" />
          </FormRow>
          <Checks $top={8}>
            <CheckRow $off><input type="checkbox" disabled />見開きページのインデント幅を設定する(M)</CheckRow>
            <CheckRow><input type="checkbox" /><span><Key t="1 行の文字数を指定時に右のインデント幅を自動調整する" k="D" end="" /></span></CheckRow>
          </Checks>
          <Section $top={2}>間隔</Section>
          <FormRow>
            <label htmlFor="before"><Key t="段落前" k="B" /></label><Spin id="before" />
            <label htmlFor="spacing"><Key t="行間" k="N" /></label><label htmlFor="at"><Key t="間隔" k="A" /></label>
          </FormRow>
          <FormRow>
            <label htmlFor="after"><Key t="段落後" k="F" /></label><Spin id="after" />
            <Field id="spacing" w={107} value="最小値" hot>
              <Options>
                {['1 行', '1.5 行', '2 行', '最小値', '固定値', '倍数'].map(o => <Option key={o} $on={o === '最小値'}>{o}</Option>)}
              </Options>
            </Field>
            <Spin id="at" value="0 pt" />
          </FormRow>
          <Checks>
            <CheckRow><input type="checkbox" />同じスタイルの場合は段落間にスペースを追加し</CheckRow>
            <CheckRow><input type="checkbox" />1 ページの行数を指定時に文字を行グリッド線に</CheckRow>
          </Checks>
          <Section $top={10} $gap={9} $small>プレビュー</Section>
          <Preview>
            <p>{prev.repeat(9)}前の<br />段落 {prev.repeat(9)}<br />{prev}</p>
            <p><strong>Table 1. Characteristics of respondents in this study (N = 1,496).</strong></p>
            <p>{next.repeat(9)}次の<br />段落 {next.repeat(9)}<br />{next.repeat(8)}</p>
          </Preview>
        </Panel>
        <Actions>
          <ActionSet $gap={41}>
            <Action $w={82}><Key t="タブ設定" k="T" end="..." /></Action>
            <Action $w={87}><Key t="既定に設定" k="D" end="" /></Action>
          </ActionSet>
          <ActionSet $gap={10}>
            <Action $w={79} $main>OK</Action>
            <Action $w={79}>キャンセル</Action>
          </ActionSet>
        </Actions>
      </Dialog>
    </Window>
  );
}
